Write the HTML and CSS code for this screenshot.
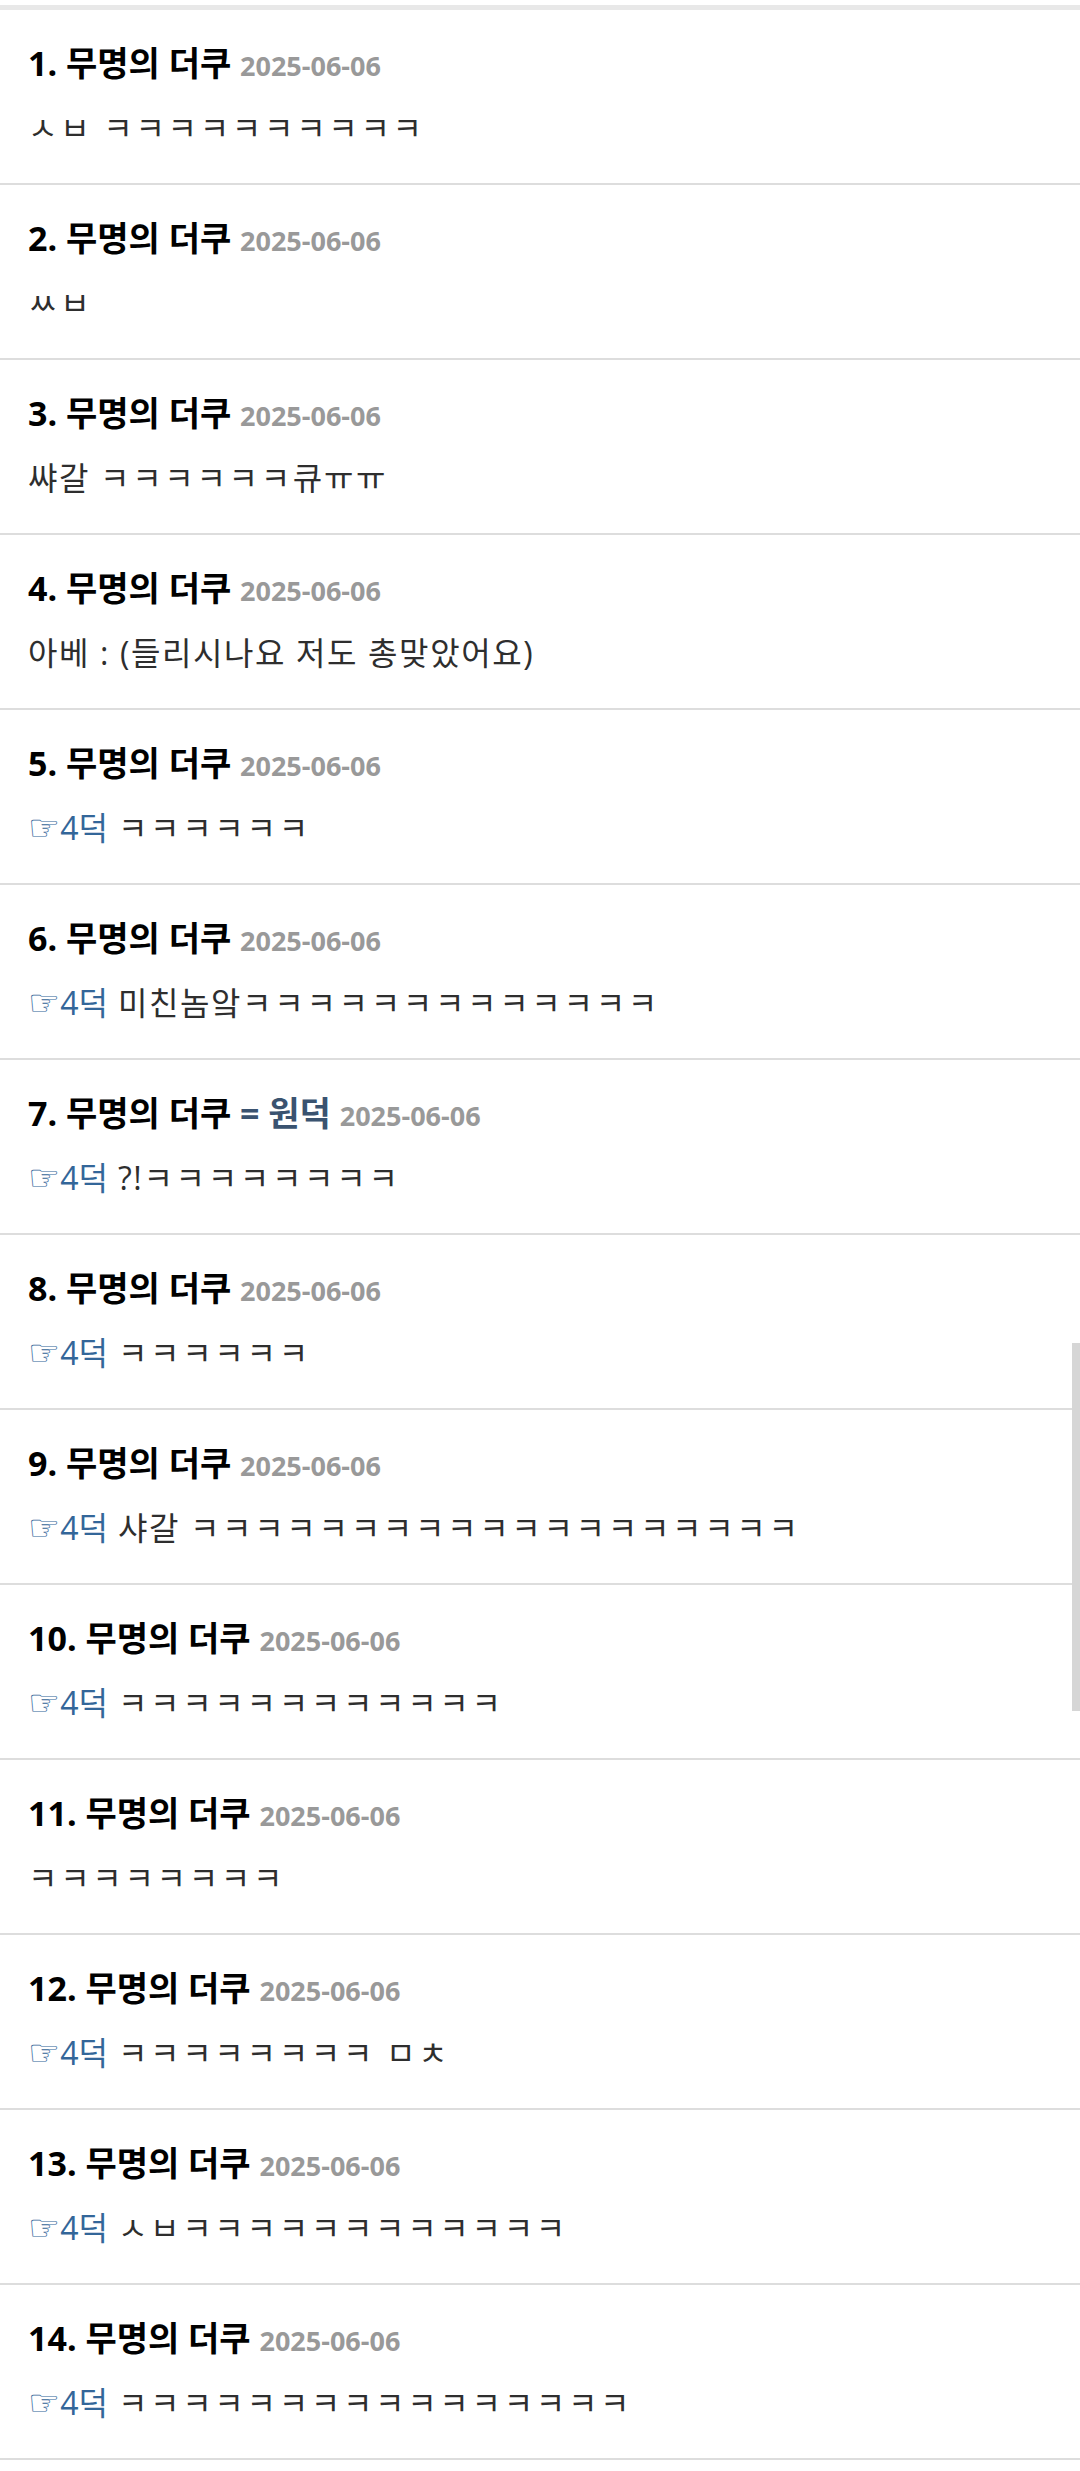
FILE: index.html
```html
<!DOCTYPE html>
<html lang="ko">
<head>
<meta charset="utf-8">
<title>댓글</title>
<link rel="stylesheet" href="styles.css">
</head>
<body>
<div class="top-bar"></div>
<ul class="comments">
  <li class="comment">
    <div class="head"><span class="name">1. 무명의 더쿠</span> <span class="date">2025-06-06</span></div>
    <div class="body"><span class="kk">ㅅㅂ ㅋㅋㅋㅋㅋㅋㅋㅋㅋㅋ</span></div>
  </li>
  <li class="comment">
    <div class="head"><span class="name">2. 무명의 더쿠</span> <span class="date">2025-06-06</span></div>
    <div class="body"><span class="kk">ㅆㅂ</span></div>
  </li>
  <li class="comment">
    <div class="head"><span class="name">3. 무명의 더쿠</span> <span class="date">2025-06-06</span></div>
    <div class="body">쌰갈 <span class="kk">ㅋㅋㅋㅋㅋㅋ</span>큐<span class="kk">ㅠㅠ</span></div>
  </li>
  <li class="comment">
    <div class="head"><span class="name">4. 무명의 더쿠</span> <span class="date">2025-06-06</span></div>
    <div class="body">아베 : (들리시나요 저도 총맞았어요)</div>
  </li>
  <li class="comment">
    <div class="head"><span class="name">5. 무명의 더쿠</span> <span class="date">2025-06-06</span></div>
    <div class="body"><a class="reply"><span class="hand">☞</span>4덕</a> <span class="kk">ㅋㅋㅋㅋㅋㅋ</span></div>
  </li>
  <li class="comment">
    <div class="head"><span class="name">6. 무명의 더쿠</span> <span class="date">2025-06-06</span></div>
    <div class="body"><a class="reply"><span class="hand">☞</span>4덕</a> 미친놈앜<span class="kk">ㅋㅋㅋㅋㅋㅋㅋㅋㅋㅋㅋㅋㅋ</span></div>
  </li>
  <li class="comment">
    <div class="head"><span class="name">7. 무명의 더쿠</span> <span class="same">= 원덕</span> <span class="date">2025-06-06</span></div>
    <div class="body"><a class="reply"><span class="hand">☞</span>4덕</a> ?!<span class="kk">ㅋㅋㅋㅋㅋㅋㅋㅋ</span></div>
  </li>
  <li class="comment">
    <div class="head"><span class="name">8. 무명의 더쿠</span> <span class="date">2025-06-06</span></div>
    <div class="body"><a class="reply"><span class="hand">☞</span>4덕</a> <span class="kk">ㅋㅋㅋㅋㅋㅋ</span></div>
  </li>
  <li class="comment">
    <div class="head"><span class="name">9. 무명의 더쿠</span> <span class="date">2025-06-06</span></div>
    <div class="body"><a class="reply"><span class="hand">☞</span>4덕</a> 샤갈 <span class="kk">ㅋㅋㅋㅋㅋㅋㅋㅋㅋㅋㅋㅋㅋㅋㅋㅋㅋㅋㅋ</span></div>
  </li>
  <li class="comment">
    <div class="head"><span class="name">10. 무명의 더쿠</span> <span class="date">2025-06-06</span></div>
    <div class="body"><a class="reply"><span class="hand">☞</span>4덕</a> <span class="kk">ㅋㅋㅋㅋㅋㅋㅋㅋㅋㅋㅋㅋ</span></div>
  </li>
  <li class="comment">
    <div class="head"><span class="name">11. 무명의 더쿠</span> <span class="date">2025-06-06</span></div>
    <div class="body"><span class="kk">ㅋㅋㅋㅋㅋㅋㅋㅋ</span></div>
  </li>
  <li class="comment">
    <div class="head"><span class="name">12. 무명의 더쿠</span> <span class="date">2025-06-06</span></div>
    <div class="body"><a class="reply"><span class="hand">☞</span>4덕</a> <span class="kk">ㅋㅋㅋㅋㅋㅋㅋㅋ ㅁㅊ</span></div>
  </li>
  <li class="comment">
    <div class="head"><span class="name">13. 무명의 더쿠</span> <span class="date">2025-06-06</span></div>
    <div class="body"><a class="reply"><span class="hand">☞</span>4덕</a> <span class="kk">ㅅㅂㅋㅋㅋㅋㅋㅋㅋㅋㅋㅋㅋㅋ</span></div>
  </li>
  <li class="comment">
    <div class="head"><span class="name">14. 무명의 더쿠</span> <span class="date">2025-06-06</span></div>
    <div class="body"><a class="reply"><span class="hand">☞</span>4덕</a> <span class="kk">ㅋㅋㅋㅋㅋㅋㅋㅋㅋㅋㅋㅋㅋㅋㅋㅋ</span></div>
  </li>
</ul>
<div class="scroll-thumb"></div>
</body>
</html>
```

FILE: styles.css
```css
html, body {
  margin: 0;
  padding: 0;
  background: #ffffff;
}

body {
  font-family: "Open Sans", "Noto Sans CJK KR", sans-serif;
  color: #333333;
}

.top-bar {
  margin-top: 5px;
  height: 5px;
  background: #e8e8e8;
}

.comments {
  list-style: none;
  margin: 0;
  padding: 0;
}

.comment {
  box-sizing: border-box;
  height: 175px;
  padding: 29px 28px 0;
  border-bottom: 2px solid #dddddd;
  display: flex;
  flex-direction: column;
  gap: 19px;
  overflow: hidden;
}

.head {
  height: 48px;
  font-size: 34px;
  line-height: 48px;
  font-weight: 700;
  color: #000000;
  white-space: nowrap;
}

.same {
  color: #3a5370;
}

.date {
  font-size: 27px;
  line-height: 1;
  color: #999999;
}

.body {
  height: 44px;
  font-size: 32px;
  line-height: 44px;
  letter-spacing: 1.6px;
  color: #2e2e2e;
  white-space: nowrap;
}

.kk {
  letter-spacing: 2.7px;
}

.reply {
  color: #336699;
  text-decoration: none;
  letter-spacing: 0;
}

.hand {
  font-family: "DejaVu Sans", sans-serif;
  font-size: 36px;
  line-height: 1;
}

.scroll-thumb {
  position: fixed;
  right: 0;
  top: 1343px;
  width: 8px;
  height: 368px;
  background: #d6d6d6;
}
```
